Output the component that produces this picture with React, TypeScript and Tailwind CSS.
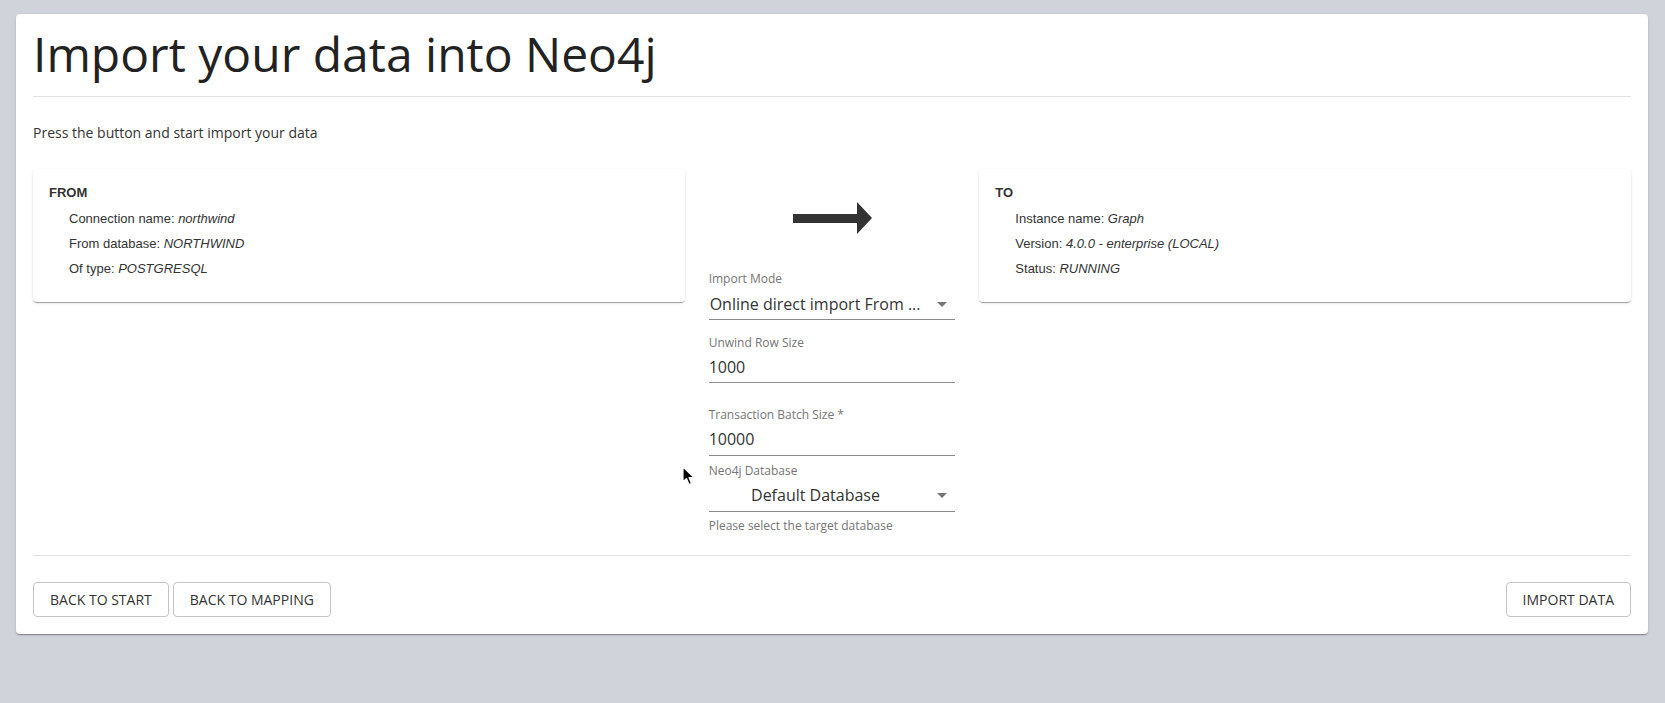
import React from "react";

const sans = { fontFamily: '"Open Sans", "Noto Sans", sans-serif' };

function Caret() {
  return (
    <svg width="10" height="5" viewBox="0 0 10 5" className="shrink-0">
      <path d="M0 0 L10 0 L5 5 Z" fill="#757575" />
    </svg>
  );
}

function InfoCard({ title, rows }: { title: string; rows: [string, string][] }) {
  return (
    <div
      className="bg-white rounded-[4px] pt-4 pl-4 pr-4 pb-[21px] text-[#333]"
      style={{
        fontFamily: '"Liberation Sans", Arial, sans-serif',
        boxShadow:
          "0px 2px 1px -1px rgba(0,0,0,0.2), 0px 1px 1px 0px rgba(0,0,0,0.14), 0px 1px 3px 0px rgba(0,0,0,0.12)",
      }}
    >
      <div className="text-[13px] font-bold leading-[16px]">{title}</div>
      <div className="mt-[4.5px] pl-5">
        {rows.map(([k, v]) => (
          <div key={k} className="text-[13px] leading-[25px] h-[25px]">
            {k}: <span className="italic">{v}</span>
          </div>
        ))}
      </div>
    </div>
  );
}

export default function App() {
  return (
    <div className="min-h-[703px] bg-[#d0d3da] pt-[14px] pl-4 pr-[17px] relative" style={sans}>
      <div
        className="bg-white rounded-[4px] px-[17px] pt-[11px] pb-[17px] text-[#333]"
        style={{
          boxShadow:
            "0px 2px 1px -1px rgba(0,0,0,0.2), 0px 1px 1px 0px rgba(0,0,0,0.14), 0px 1px 3px 0px rgba(0,0,0,0.12)",
        }}
      >
        <h1 className="text-[48px] leading-[58px] font-normal text-[#222]">Import your data into Neo4j</h1>
        <div className="mt-[13px] border-t border-[#e0e0e0]" />
        <p className="mt-[26px] text-[14px] leading-[20px]">Press the button and start import your data</p>

        <div className="mt-[26px] flex items-start gap-6">
          <div className="flex-1">
            <InfoCard
              title="FROM"
              rows={[
                ["Connection name", "northwind"],
                ["From database", "NORTHWIND"],
                ["Of type", "POSTGRESQL"],
              ]}
            />
          </div>

          <div className="w-[246.7px] shrink-0">
            <div className="mt-[33px] flex justify-center">
              <svg width="79" height="32" viewBox="0 0 79 32">
                <path d="M0 12 H64 V0 L79 16 L64 32 V21 H0 Z" fill="#333" />
              </svg>
            </div>

            {/* Import Mode */}
            <div className="mt-[37px]">
              <div className="text-[12px] leading-[16px] text-[#757575]">Import Mode</div>
              <div className="mt-[5px] flex items-center justify-between pb-[3px] border-b border-[#8a8a8a]">
                <span className="text-[16px] leading-[24px] pl-[1px]">Online direct import From ...</span>
                <span className="pr-[8px]"><Caret /></span>
              </div>
            </div>

            {/* Unwind Row Size */}
            <div className="mt-[15px]">
              <div className="text-[12px] leading-[16px] text-[#757575]">Unwind Row Size</div>
              <div className="mt-[4px] pb-[3px] border-b border-[#8a8a8a]">
                <span className="text-[16px] leading-[24px]">1000</span>
              </div>
            </div>

            {/* Transaction Batch Size */}
            <div className="mt-[24px]">
              <div className="text-[12px] leading-[16px] text-[#757575]">Transaction Batch Size *</div>
              <div className="mt-[4px] pb-[4px] border-b border-[#8a8a8a]">
                <span className="text-[16px] leading-[24px]">10000</span>
              </div>
            </div>

            {/* Neo4j Database */}
            <div className="mt-[7px]">
              <div className="text-[12px] leading-[16px] text-[#757575]">Neo4j Database</div>
              <div className="mt-[4px] flex items-center pb-[4px] border-b border-[#8a8a8a]">
                <span className="flex-1 text-center text-[16px] leading-[24px] pr-[15px]">Default Database</span>
                <span className="pr-[8px]"><Caret /></span>
              </div>
              <div className="mt-[6px] text-[12px] leading-[16px] text-[#757575]">Please select the target database</div>
            </div>
          </div>

          <div className="flex-1">
            <InfoCard
              title="TO"
              rows={[
                ["Instance name", "Graph"],
                ["Version", "4.0.0 - enterprise (LOCAL)"],
                ["Status", "RUNNING"],
              ]}
            />
          </div>
        </div>

        <div className="mt-[21px] border-t border-[#e0e0e0]" />

        <div className="mt-[26px] flex items-center justify-between">
          <div className="flex gap-1">
            <button className="h-[35px] px-4 rounded-[4px] border border-[#c4c4c4] text-[14px] text-[#333] uppercase">
              Back to start
            </button>
            <button className="h-[35px] px-4 rounded-[4px] border border-[#c4c4c4] text-[14px] text-[#333] uppercase">
              Back to mapping
            </button>
          </div>
          <button className="h-[35px] px-4 rounded-[4px] border border-[#c4c4c4] text-[14px] text-[#333] uppercase">
            Import data
          </button>
        </div>
      </div>

      {/* mouse cursor */}
      <svg className="absolute left-[682px] top-[466px]" width="14" height="21" viewBox="0 0 14 21">
        <path d="M1 1 L1 16 L4.5 12.5 L7 18.5 L9.5 17.5 L7 11.5 L12 11.5 Z" fill="#000" stroke="#fff" strokeWidth="1.2" strokeLinejoin="round" />
      </svg>
    </div>
  );
}
